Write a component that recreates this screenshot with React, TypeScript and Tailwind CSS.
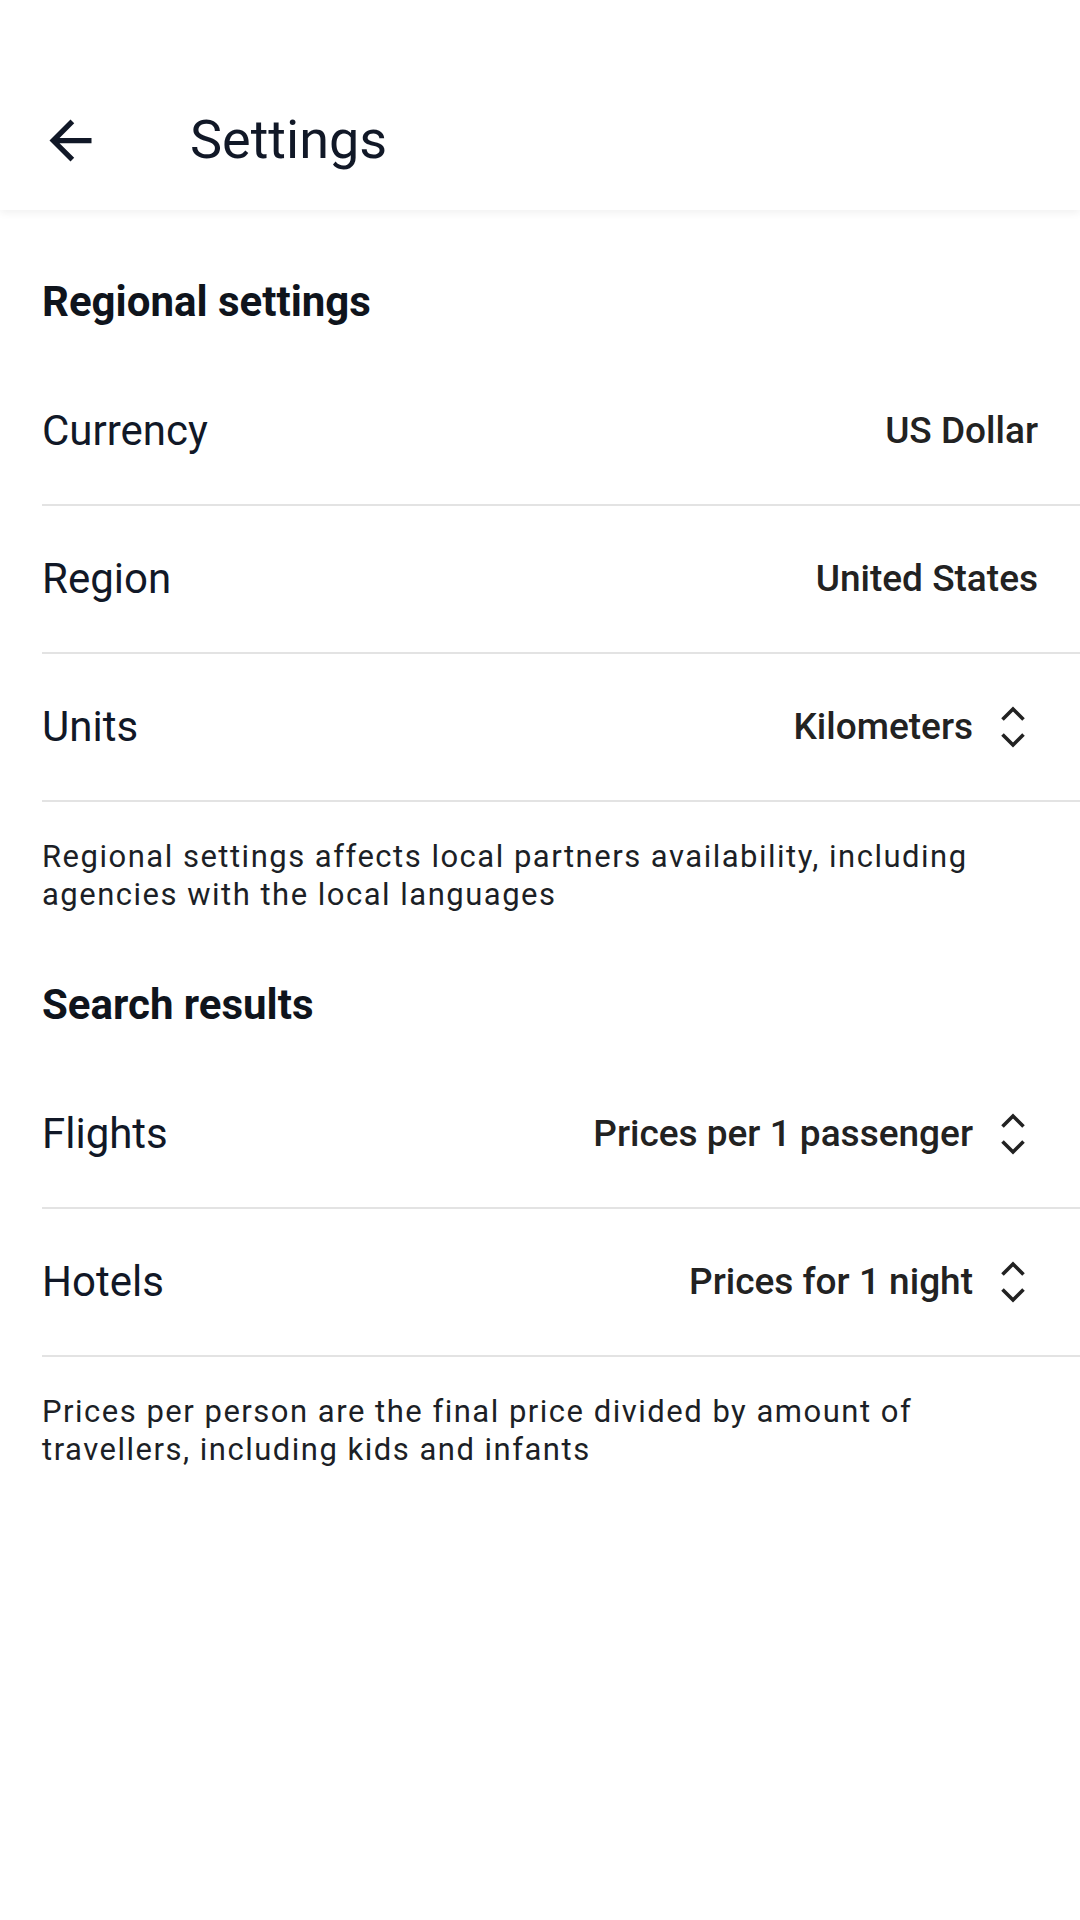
import React from 'react';

const font = { fontFamily: 'Roboto, "Noto Sans", Arial, sans-serif' };

function BackArrow() {
  return (
    <svg width="63" height="63" viewBox="0 0 24 24" fill="#111827">
      <path d="M20 11H7.83l5.59-5.59L12 4l-8 8 8 8 1.41-1.41L7.83 13H20v-2z" />
    </svg>
  );
}

function UpDown() {
  return (
    <svg width="26" height="42" viewBox="0 0 26 42" fill="none" stroke="#222222" strokeWidth="3.6" className="ml-[27px] mr-[12px]">
      <path d="M2.5 13.5L13 3l10.5 10.5" />
      <path d="M2.5 28.5L13 39l10.5-10.5" />
    </svg>
  );
}

function Row({ label, value, select }: { label: string; value: string; select?: boolean }) {
  return (
    <div className="flex h-[148px] items-center justify-between border-b-2 border-[#e3e3e3] pr-[42px]">
      <span className="text-[42px] leading-[56px] text-[#111827]">{label}</span>
      <span className="flex items-center">
        <span className="text-[37px] font-medium leading-[50px] text-[#222222]">{value}</span>
        {select && <UpDown />}
      </span>
    </div>
  );
}

function SectionTitle({ children, top }: { children: React.ReactNode; top: string }) {
  return (
    <h2 className={`${top} pb-[28px] pr-[44px] text-[42px] font-bold leading-[56px] text-[#0f141c]`}>{children}</h2>
  );
}

function Note({ children }: { children: React.ReactNode }) {
  return (
    <p className="pr-[60px] pt-[36px] text-[31px] leading-[37.5px] tracking-[1.5px] text-[#1c1f26]">{children}</p>
  );
}

export default function App() {
  return (
    <div className="min-h-[1920px] w-full bg-white" style={font}>
      <header className="relative z-10 h-[210px] bg-white pt-[70px] shadow-[0_3px_8px_rgba(0,0,0,0.06)]">
        <div className="flex h-[140px] items-center gap-[88px] pl-[39px]">
          <BackArrow />
          <h1 className="text-[54px] font-normal leading-[70px] text-[#111827]">Settings</h1>
        </div>
      </header>

      <main className="pl-[42px]">
        <SectionTitle top="pt-[64px]">Regional settings</SectionTitle>
        <Row label="Currency" value="US Dollar" />
        <Row label="Region" value="United States" />
        <Row label="Units" value="Kilometers" select />
        <Note>Regional settings affects local partners availability, including agencies with the local languages</Note>

        <SectionTitle top="pt-[64px]">Search results</SectionTitle>
        <Row label="Flights" value="Prices per 1 passenger" select />
        <Row label="Hotels" value="Prices for 1 night" select />
        <Note>Prices per person are the final price divided by amount of travellers, including kids and infants</Note>
      </main>
    </div>
  );
}
